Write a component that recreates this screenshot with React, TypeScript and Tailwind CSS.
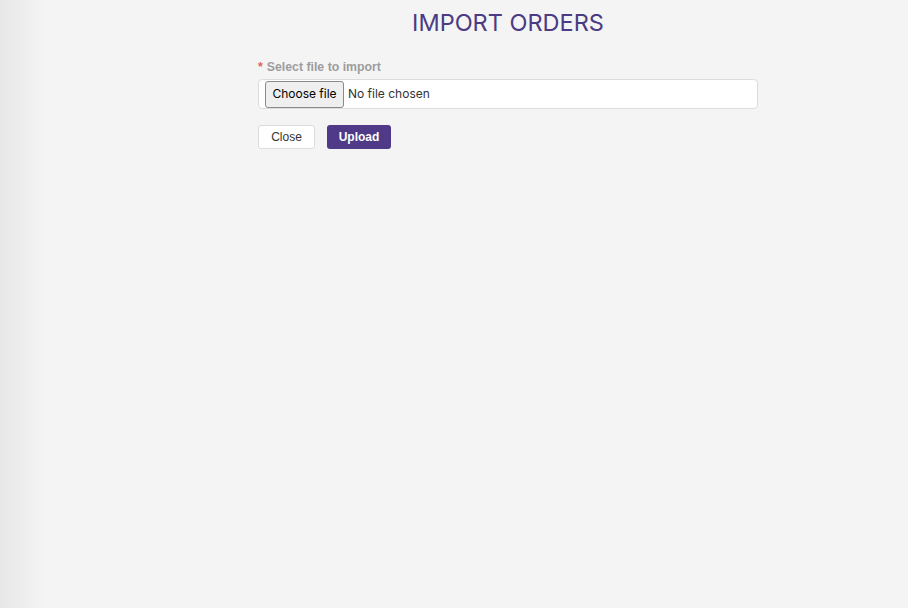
export default function App() {
  return (
    <div className="flex min-h-[608px] w-full bg-[#f4f4f4] font-['Inter',sans-serif]">
      {/* soft shadow from the collapsed side panel */}
      <div className="w-[45px] shrink-0 bg-gradient-to-r from-[#e7e7e7] to-[#f4f4f4]" />
      <main className="flex flex-1 flex-col items-center pl-[63px]">
        <h1 className="mt-[10px] text-[23.5px] font-normal leading-[26px] text-[#4b3b82]">IMPORT ORDERS</h1>
        <form className="mt-[24px] w-[500px]" onSubmit={(e) => e.preventDefault()}>
          <label
            htmlFor="file"
            className="block font-['Liberation_Sans',Arial,sans-serif] text-[12.3px] font-bold leading-[15px] text-[#9d9d9d]"
          >
            <span className="mr-[4px] text-[#e0625f]">*</span>
            Select file to import
          </label>
          <label
            htmlFor="file"
            className="mt-[4px] flex h-[30px] cursor-pointer items-center rounded-[4px] border border-[#dcdcdc] bg-white pl-[6px] text-[12px]"
          >
            <input id="file" type="file" className="hidden" />
            <span className="flex h-[27px] w-[79px] items-center justify-center rounded-[3px] border border-[#8a8a8a] bg-[#efefef] text-black">
              Choose file
            </span>
            <span className="ml-[4px] text-[#333]">No file chosen</span>
          </label>
          <div className="mt-[16px] flex gap-[12px] font-['Liberation_Sans',Arial,sans-serif] text-[12px]">
            <button type="button" className="h-[24px] w-[57px] rounded-[3px] border border-[#dcdcdc] bg-white font-normal text-[#333]">
              Close
            </button>
            <button type="submit" className="h-[24px] w-[64px] rounded-[3px] bg-[#4e3a86] font-bold text-white">
              Upload
            </button>
          </div>
        </form>
      </main>
    </div>
  );
}
